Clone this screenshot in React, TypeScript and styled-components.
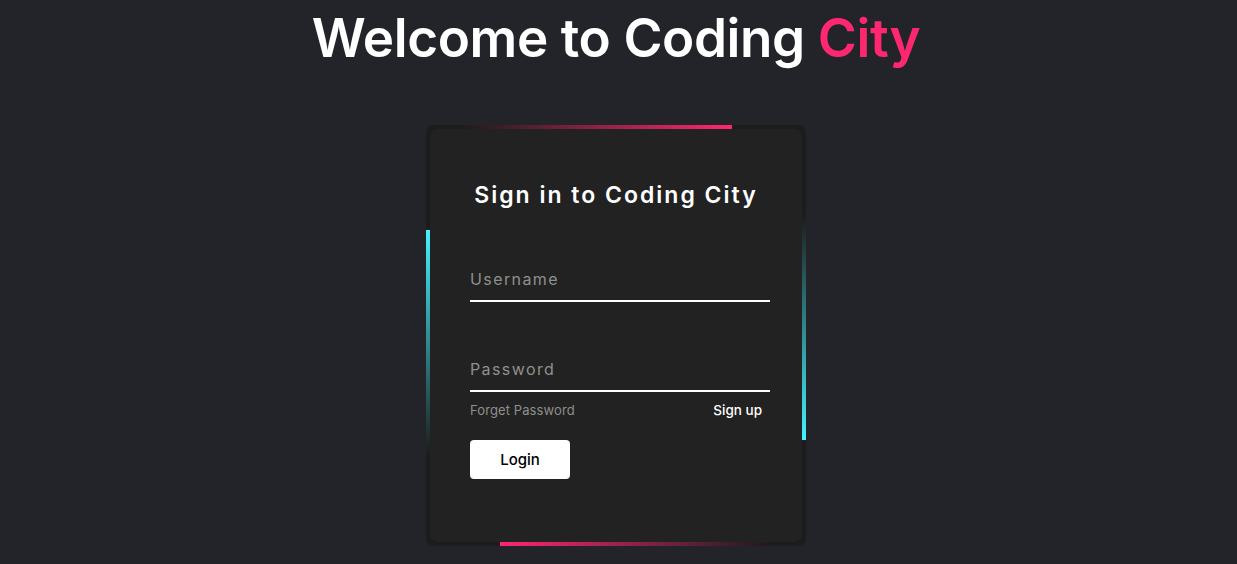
import React from "react";
import styled, { createGlobalStyle } from "styled-components";

const GlobalStyle = createGlobalStyle`
  * { box-sizing: border-box; }
  html, body { margin: 0; padding: 0; }
  body {
    background: #23242a;
    font-family: "Inter", "Noto Sans", sans-serif;
    color: #fff;
  }
`;

const Page = styled.main`
  display: flex;
  flex-direction: column;
  align-items: center;
  min-height: 564px;
  padding: 6px 5px 0 0;
`;

const Heading = styled.h1`
  margin: 0;
  font-size: 53px;
  line-height: 64px;
  font-weight: 600;
  letter-spacing: -0.4px;
  color: #fff;
`;

const Accent = styled.span`
  color: #ff2770;
`;

const Card = styled.section`
  position: relative;
  flex-shrink: 0;
  width: 380px;
  height: 421px;
  margin-top: 55px;
  padding: 4px;
  background: #1c1c1c;
  border-radius: 8px;
  overflow: hidden;
`;

const Line = styled.span<{ $side: "top" | "right" | "bottom" | "left" }>`
  position: absolute;
  z-index: 1;
  ${({ $side }) =>
    $side === "top"
      ? `top: 0; left: 36px; width: 270px; height: 4px;
         background: linear-gradient(90deg, transparent, #ff2770);`
      : $side === "bottom"
      ? `bottom: 0; left: 74px; width: 270px; height: 4px;
         background: linear-gradient(270deg, transparent, #ff2770);`
      : $side === "left"
      ? `left: 0; top: 105px; width: 4px; height: 225px;
         background: linear-gradient(180deg, #45f3ff, transparent);`
      : `right: 0; top: 90px; width: 4px; height: 225px;
         background: linear-gradient(0deg, #45f3ff, transparent);`}
`;

const Form = styled.form`
  position: relative;
  z-index: 2;
  height: 100%;
  display: flex;
  flex-direction: column;
  padding: 50px 32px 0 40px;
  background: #222222;
  border-radius: 8px;
  & > * { flex-shrink: 0; }
`;

const Title = styled.h2`
  margin: 0 8px 0 0;
  font-size: 23px;
  line-height: 32px;
  font-weight: 600;
  letter-spacing: 2px;
  text-align: center;
  color: #fff;
`;

const Field = styled.input<{ $first?: boolean }>`
  width: 300px;
  margin-top: ${({ $first }) => ($first ? "38px" : "37px")};
  padding: 20px 0 11px 0;
  background: transparent;
  border: none;
  border-bottom: 2px solid #fff;
  outline: none;
  font-family: inherit;
  font-size: 16px;
  line-height: 20px;
  letter-spacing: 1.4px;
  color: #fff;
  &::placeholder {
    color: #8f8f8f;
  }
`;

const Links = styled.div`
  width: 300px;
  display: flex;
  justify-content: space-between;
  padding: 0 8px 0 0;
  margin-top: 10px;
`;

const LinkText = styled.a<{ $bright?: boolean }>`
  line-height: 16px;
  text-decoration: none;
  color: ${({ $bright }) => ($bright ? "#fff" : "#8f8f8f")};
  font-weight: ${({ $bright }) => ($bright ? 500 : 400)};
  font-size: ${({ $bright }) => ($bright ? "13.5px" : "13px")};
  letter-spacing: ${({ $bright }) => ($bright ? "0" : "0.1px")};
`;

const Button = styled.button`
  align-self: flex-start;
  width: 100px;
  height: 39px;
  margin-top: 22px;
  border: none;
  border-radius: 4px;
  background: #fff;
  color: #000;
  font-family: inherit;
  font-size: 15px;
  font-weight: 500;
  cursor: pointer;
`;

export default function App() {
  return (
    <>
      <GlobalStyle />
      <Page>
        <Heading>
          Welcome to Coding <Accent>City</Accent>
        </Heading>
        <Card>
          <Line $side="top" />
          <Line $side="right" />
          <Line $side="bottom" />
          <Line $side="left" />
          <Form onSubmit={(e) => e.preventDefault()}>
            <Title>Sign in to Coding City</Title>
            <Field $first type="text" placeholder="Username" />
            <Field type="password" placeholder="Password" />
            <Links>
              <LinkText href="#">Forget Password</LinkText>
              <LinkText href="#" $bright>
                Sign up
              </LinkText>
            </Links>
            <Button type="submit">Login</Button>
          </Form>
        </Card>
      </Page>
    </>
  );
}
